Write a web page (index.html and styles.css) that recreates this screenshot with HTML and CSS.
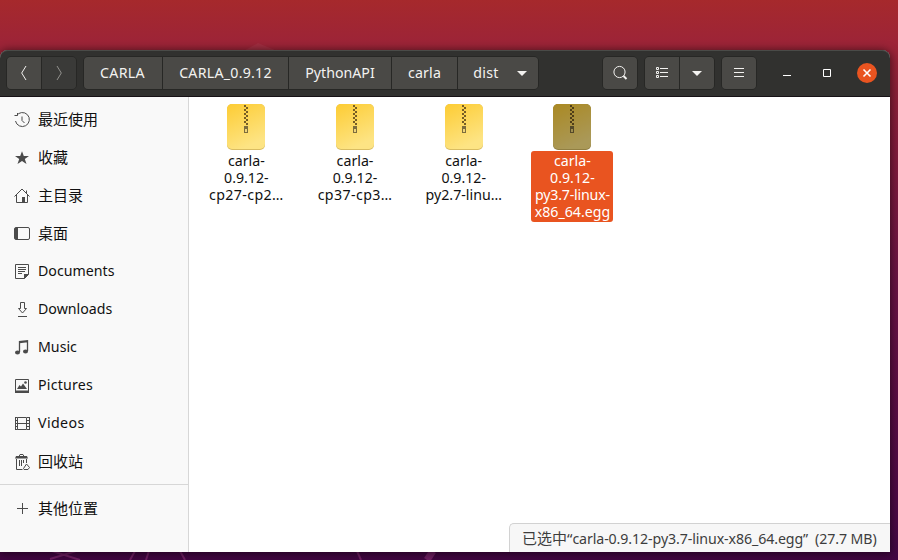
FILE: index.html
```html
<!DOCTYPE html>
<html lang="zh-CN">
<head>
<meta charset="utf-8">
<title>dist</title>
<link rel="stylesheet" href="styles.css">
</head>
<body>
<svg class="wallpaper" width="898" height="560" viewBox="0 0 898 560"><path d="M240 53L258 43L282 53Z"/><path class="line" d="M52 551L80 560M76 551L50 559M135 551L130 560M149 551L146 560M180 551L185 560M357 551L361 560"/><path class="line wide" d="M433 551L427 560"/></svg>
<main class="window">
  <header class="bar">
    <div class="group nav">
      <button class="btn"><svg width="16" height="16" viewBox="0 0 16 16"><path d="M10 1L5.700 8L10 15"/></svg></button>
      <button class="btn off"><svg width="16" height="16" viewBox="0 0 16 16"><path d="M6 1L10.300 8L6 15"/></svg></button>
    </div>
    <div class="group path">
      <button class="btn p1"><span>CARLA</span></button>
      <button class="btn p2"><span>CARLA_0.9.12</span></button>
      <button class="btn p3"><span>PythonAPI</span></button>
      <button class="btn p4"><span>carla</span></button>
      <button class="btn p5"><span>dist</span><i class="caret"></i></button>
    </div>
    <div class="group search"><button class="btn"><svg width="16" height="16" viewBox="0 0 16 16"><circle cx="7.500" cy="7" r="5.600"/><path d="M11.500 11L14.500 14" stroke-width="2"/></svg></button></div>
    <div class="group view">
      <button class="btn"><svg width="16" height="16" viewBox="0 0 16 16"><path d="M2.500 2.500h2v2h-2zM2.500 6.500h2v2h-2zM2.500 10.500h2v2h-2zM6 3.500h8M6 7.500h8M6 11.500h8"/></svg></button>
      <button class="btn"><i class="caret"></i></button>
    </div>
    <div class="group menu"><button class="btn"><svg width="16" height="16" viewBox="0 0 16 16"><path d="M3 3.500h10M3 7.500h10M3 11.500h10"/></svg></button></div>
    <div class="controls">
      <svg width="16" height="16" viewBox="0 0 16 16"><path d="M4 10.500h8"/></svg>
      <svg width="16" height="16" viewBox="0 0 16 16"><path d="M4.500 4.500h7v7h-7z"/></svg>
      <span class="close"><svg width="16" height="16" viewBox="0 0 16 16"><path d="M4.500 4.500l7 7M11.500 4.500l-7 7"/></svg></span>
    </div>
  </header>
  <div class="content">
    <nav class="side">
      <ul>
        <li class="cjk"><svg width="16" height="16" viewBox="0 0 16 16"><path d="M2.300 4A7 7 0 1 1 1.500 9" /><path d="M.5 3.500H3.500V1M8 4.500V8.500L10.500 11" /></svg><span>最近使用</span></li>
        <li class="cjk"><svg width="16" height="16" viewBox="0 0 16 16"><path class="fill" d="M8 1.200L9.800 6H15L10.800 9L12.500 14L8 11L3.500 14L5.200 9L1 6H6.200Z"/></svg><span>收藏</span></li>
        <li class="cjk"><svg width="16" height="16" viewBox="0 0 16 16"><path d="M.5 8.500L8 1L15.500 8.500M2.500 7V14.500H13.500V7M12.500 5V2.500"/><path class="fill" d="M8 9h3v5.500H8z"/></svg><span>主目录</span></li>
        <li class="cjk"><svg width="16" height="16" viewBox="0 0 16 16"><rect x=".5" y="1.500" width="15" height="12" rx="1.500"/><path class="fill" d="M1 2h3v11H1z"/></svg><span>桌面</span></li>
        <li><svg width="16" height="16" viewBox="0 0 16 16"><path d="M1.500 .5h13v10l-4 4h-9zM4 3.500h8M4 5.500h8M4 7.500h7M4 9.500h4"/><path class="fill" d="M10 15v-5h5z"/></svg><span>Documents</span></li>
        <li><svg width="16" height="16" viewBox="0 0 16 16"><path d="M6.500 .5h4v6h2L8.500 11L4.500 6.500h2zM4 14.500h9"/></svg><span>Downloads</span></li>
        <li><svg width="16" height="16" viewBox="0 0 16 16"><path d="M5.500 12V1.500L13.500 .7V11M5.500 2.500L13.500 1.500" stroke-width="1.300"/><ellipse class="fill" cx="3.500" cy="12.500" rx="2.500" ry="2"/><ellipse class="fill" cx="11.500" cy="11.500" rx="2.500" ry="2"/></svg><span>Music</span></li>
        <li><svg width="16" height="16" viewBox="0 0 16 16"><path d="M1.500 1.500h13v13h-13z"/><path class="fill" d="M1 12.500h14V15H1zM3 11l2.500-4L7 8.500L9 5.500L13 11z"/><circle class="fill" cx="11.500" cy="4.500" r="1.300"/></svg><span class="roomy">Pictures</span></li>
        <li><svg width="16" height="16" viewBox="0 0 16 16"><path d="M3.500 1.500h9v12h-9zM3.500 7.500h9M1.500 1v13M15.500 1v13"/><path class="holes" d="M2.500 1v13M14 1v13"/></svg><span class="roomier">Videos</span></li>
        <li class="cjk"><svg width="16" height="16" viewBox="0 0 16 16"><path d="M5 2.500L6 .5h3l1 2M2.500 5v10.500h6M12.500 5v4M5.500 6v6M7.500 6v6M9.500 6v3M9.500 14.500L12.500 10L15.500 13.500L14 15.500H10z"/><path class="fill" d="M2 2h11l1 2.500H1z"/></svg><span>回收站</span></li>
      </ul>
      <div class="other cjk"><svg width="16" height="16" viewBox="0 0 16 16"><path d="M3 7.500h11M8.500 2v11"/></svg><span>其他位置</span></div>
    </nav>
    <section class="files">
      <div class="file"><svg class="zip" width="38" height="46" viewBox="0 0 38 46"><use href="#zip"/></svg><div class="name">carla-<br>0.9.12-<br><span class="wide-text">cp27-cp2…</span></div></div>
      <div class="file"><svg class="zip" width="38" height="46" viewBox="0 0 38 46"><use href="#zip"/></svg><div class="name">carla-<br>0.9.12-<br><span class="wide-text">cp37-cp3…</span></div></div>
      <div class="file"><svg class="zip" width="38" height="46" viewBox="0 0 38 46"><use href="#zip"/></svg><div class="name">carla-<br>0.9.12-<br>py2.7-linu…</div></div>
      <div class="file selected"><svg class="zip" width="38" height="46" viewBox="0 0 38 46"><use href="#zip"/></svg><div class="name">carla-<br>0.9.12-<br><span class="narrow-text">py3.7-linux-</span><br>x86_64.egg</div></div>
    </section>
  </div>
  <footer class="status"><span class="sel">已选中“</span><span class="fn">carla-0.9.12-py3.7-linux-x86_64.egg”</span><span class="size">(27.7 MB)</span></footer>
</main>
<svg class="defs" width="0" height="0"><defs>
  <linearGradient id="gold" x1="0" y1="0" x2=".4" y2="1"><stop offset="0" stop-color="#fdcc33"/><stop offset="1" stop-color="#fde484"/></linearGradient>
  <g id="zip"><rect width="38" height="46" rx="5" fill="#d9bd62"/><rect width="38" height="45" rx="5" fill="url(#gold)"/>
  <path d="M18 1v20" stroke="#765d25" stroke-width="2" stroke-dasharray="2 2"/><path d="M20 3v18" stroke="#765d25" stroke-width="2" stroke-dasharray="2 2"/>
  <path d="M17 22h4v7h-4z" fill="#7d6d3d"/><path d="M18 25h2v3h-2z" fill="#eed478"/></g>
</defs></svg>
</body>
</html>
```
FILE: styles.css
```css
* { box-sizing: border-box; }
body { margin: 0; width: 898px; height: 560px; padding-top: 50px; overflow: hidden; font: 14.2px/17px "Noto Sans", "Noto Sans CJK SC", sans-serif; color: #111; background: linear-gradient(#a6292c 0, #9d2437 42px, #8c2038 90px, #6a1343 280px, #4a0844 520px, #420642 560px); }
svg { display: block; flex: none; fill: none; stroke: currentColor; stroke-width: 1; }
.fill { fill: currentColor; stroke: none; }
.holes { stroke-dasharray: 1 2; stroke-width: 2; }
.wallpaper { position: absolute; left: 0; top: 0; z-index: -1; }
.wallpaper path { fill: #ffffff0c; stroke: none; }
.wallpaper .line { fill: none; stroke: #6f1f62; stroke-width: 2; }
.wallpaper .wide { stroke-width: 7; }
.window { position: relative; width: 890px; height: 502px; border-radius: 8px 8px 0 0; background: #fff; box-shadow: 0 1px 8px 1px #0008; display: flex; flex-direction: column; }
.bar { height: 47px; flex: none; display: flex; align-items: flex-start; padding: 6px 0 0 6px; background: #31312f; border-radius: 8px 8px 0 0; border-bottom: 1px solid #171216; box-shadow: inset 0 1px #4a4b48; }
.group { display: flex; height: 34px; border: 1px solid #272725; border-radius: 5px; overflow: hidden; }
.btn { display: flex; align-items: center; justify-content: center; height: 32px; padding: 0; border: 0; border-right: 1px solid #272725; background: #4a4946; color: #f3f2f0; font: inherit; white-space: nowrap; }
.btn span { padding-bottom: 2px; }
.btn:last-child { border-right: 0; }
.btn.off { background: #3a3a38; color: #92918e; }
.nav { width: 71px; }
.nav .btn { width: 35px; }
.path { width: 456px; margin-left: 6px; }
.p1 { width: 79px; padding-right: 1px; letter-spacing: .3px; } .p2 { width: 126px; letter-spacing: .25px; } .p3 { width: 103px; } .p4 { width: 66px; letter-spacing: .2px; } .p5 { width: 80px; gap: 18px; padding-left: 4px; letter-spacing: .3px; }
.caret { border: 5px solid transparent; border-top-color: #f3f2f0; border-bottom: 0; }
.search { width: 36px; margin-left: 63px; } .search .btn { width: 34px; }
.view { width: 71px; margin-left: 6px; } .view .btn { width: 35px; }
.menu { width: 36px; margin-left: 6px; } .menu .btn { width: 34px; }
.controls { display: flex; align-items: center; height: 34px; margin-left: 22px; gap: 24px; color: #fff; }
.close { width: 20px; height: 20px; margin-left: -2px; border-radius: 50%; background: #e95420; display: grid; place-items: center; }
.close svg { stroke-width: 1.600; }
.content { flex: 1; display: flex; }
.side { width: 189px; background: #f9f9f9; border-right: 1px solid #d7d7d7; }
ul { list-style: none; margin: 0; padding: 4px 0 3px; }
li, .other { display: flex; align-items: center; height: 38px; padding-left: 14px; gap: 8px; }
.side svg { color: #4b4b4b; }
.side span { padding-bottom: 3px; }
.side .cjk span { padding-bottom: 2px; font: 15px/20px "Noto Sans CJK SC", sans-serif; }
.side .other { height: 48px; border-top: 1px solid #d7d7d7; }
.roomy { letter-spacing: .2px; }
.roomier { letter-spacing: .4px; }
.files { display: flex; padding: 7px 0 0 3px; }
.file { width: 108.700px; display: flex; flex-direction: column; align-items: center; }
.zip { stroke: none; }
.name { text-align: center; padding: 1px 3px 0; margin-top: 1px; white-space: nowrap; }
.wide-text { letter-spacing: .4px; }
.narrow-text { letter-spacing: -.2px; }
.selected .name { width: 82px; height: 71px; background: #e95420; color: #fff; border-radius: 3px; }
.selected .zip { filter: brightness(.67); }
.status { position: absolute; right: 0; bottom: 0; width: 381px; height: 29px; border: 1px solid #d2d2d2; border-width: 1px 0 0 1px; border-radius: 5px 0 0; background: #f7f7f7; color: #3d3d3d; display: flex; align-items: center; padding: 0 0 0 12px; white-space: nowrap; }
.sel { font-size: 15px; }
.fn { letter-spacing: -.1px; }
.size { margin-left: 7px; letter-spacing: -.1px; }
.defs { position: absolute; }
```
